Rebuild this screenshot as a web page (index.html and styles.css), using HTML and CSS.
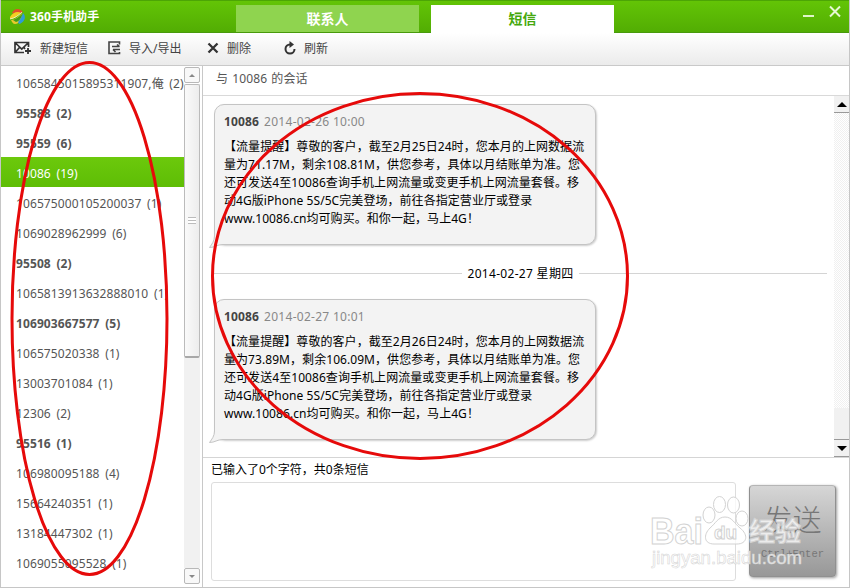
FILE: index.html
```html
<!DOCTYPE html>
<html lang="zh-CN">
<head>
  <meta charset="UTF-8">
  <title>360手机助手</title>
  <link rel="stylesheet" href="styles.css">
</head>
<body>
<div class="window">

  <header class="titlebar">
    <div class="brand">
      <svg width="17" height="17" viewBox="0 0 17 17">
        <path d="M3 5 C5 0 11 0 14 4 L8 7 Z" fill="#e2502a"/>
        <path d="M1 9 C4 4 9 3 12 5 L7 9 C5 10 3 11 1 11 Z" fill="#f3cf22"/>
        <path d="M2 12 C6 12 9 9 13 5 C13 10 11 16 6 16 C4 16 3 14 2 12 Z" fill="#e8c92c"/>
        <path d="M4 12 C7 11 10 9 13 6 C13 9 11 13 7 14 Z" fill="#3f9e1c"/>
        <path d="M14 5 C18 9 15 15 10 16 L9 14 C12 11 13 8 14 5 Z" fill="#2e9bd8"/>
        <path d="M1 11 C6 10 9 8 13 4" fill="none" stroke="#fff" stroke-width=".7"/>
      </svg>
      <span>360手机助手</span>
    </div>
    <nav class="tabs">
      <a class="tab">联系人</a>
      <a class="tab active">短信</a>
    </nav>
    <div class="controls">
      <svg width="40" height="16" viewBox="0 0 40 16">
        <path d="M1 12H12" stroke="#dff5c8" stroke-width="2"/>
        <path d="M28 2.500L38 12.500M38 2.500L28 12.500" stroke="#e6f8d4" stroke-width="2"/>
      </svg>
    </div>
  </header>

  <div class="toolbar">
    <a class="tool tool-new">
      <svg width="18" height="14" viewBox="0 0 18 14">
        <path d="M10 11.500H1V1.500H14.500V6M1.500 2L7.750 8L14 2M1.500 11L5.500 6.500M10 6.500L11 8" fill="none" stroke="#333" stroke-width="1.700"/>
        <path d="M14 7V13M11 10H17" stroke="#333" stroke-width="1.800"/>
      </svg>
      <span>新建短信</span>
    </a>
    <a class="tool tool-io">
      <svg width="13" height="14" viewBox="0 0 13 14">
        <path d="M11.500 3.500V1H1V12.500H11.500V11M4 5.500H11.500M9 3.500L11.500 5.500M12 8.500H5M7.500 11L5 8.500" fill="none" stroke="#444" stroke-width="1.600"/>
      </svg>
      <span>导入/导出</span>
    </a>
    <a class="tool tool-del">
      <svg width="12" height="12" viewBox="0 0 12 12">
        <path d="M1.500 1.500L10.500 10.500M10.500 1.500L1.500 10.500" stroke="#333" stroke-width="2.300"/>
      </svg>
      <span>删除</span>
    </a>
    <a class="tool tool-refresh">
      <svg width="12" height="14" viewBox="0 0 12 14">
        <path d="M6 3.500A4.500 4.500 0 1 0 10.500 8" fill="none" stroke="#333" stroke-width="2"/>
        <path d="M5.500 0L10 3.500L5.500 7Z" fill="#333"/>
      </svg>
      <span>刷新</span>
    </a>
  </div>

  <div class="main">
    <aside class="sidebar">
      <ul class="contacts">
        <li>1065845015895311907,俺 (2)</li>
        <li class="unread">95588 (2)</li>
        <li class="unread">95559 (6)</li>
        <li class="selected">10086 (19)</li>
        <li class="cut">106575000105200037 (1)</li>
        <li>1069028962999 (6)</li>
        <li class="unread">95508 (2)</li>
        <li class="cut">1065813913632888010 (1)</li>
        <li class="unread">106903667577 (5)</li>
        <li>106575020338 (1)</li>
        <li>13003701084 (1)</li>
        <li>12306 (2)</li>
        <li class="unread">95516 (1)</li>
        <li>106980095188 (4)</li>
        <li>15664240351 (1)</li>
        <li>13184447302 (1)</li>
        <li>1069055095528 (1)</li>
      </ul>
      <div class="list-scroll">
        <div class="scroll-btn"><i class="arrow-up"></i></div>
        <div class="scroll-thumb"><i class="grip"></i></div>
        <div class="scroll-track"></div>
        <div class="scroll-btn"><i class="arrow-down"></i></div>
      </div>
    </aside>

    <section class="chat">
      <div class="chat-title">与 10086 的会话</div>

      <div class="chat-body">
        <div class="messages">
          <div class="bubble">
            <div class="meta"><b>10086</b><span>2014-02-26 10:00</span></div>
            <p>【流量提醒】尊敬的客户，截至2月25日24时，您本月的上网数据流<br>量为71.17M，剩余108.81M，供您参考，具体以月结账单为准。您<br>还可发送4至10086查询手机上网流量或变更手机上网流量套餐。移<br>动4G版iPhone 5S/5C完美登场，前往各指定营业厅或登录<br>www.10086.cn均可购买。和你一起，马上4G！</p>
            <svg class="tail" width="20" height="14" viewBox="0 0 20 14">
              <path d="M5.500 0V1C5.500 6 3 9 .5 12.500C6 12.500 8 9.500 14 9.500L20 9.500V0Z" fill="#f3f3f3"/>
              <path d="M5.500 0V1C5.500 6 3 9 .5 12.500C6 12.500 8 9.500 14 9.500H20" fill="none" stroke="#c4c4c4"/>
            </svg>
          </div>

          <div class="date-line"><span>2014-02-27 星期四</span></div>

          <div class="bubble">
            <div class="meta"><b>10086</b><span>2014-02-27 10:01</span></div>
            <p>【流量提醒】尊敬的客户，截至2月26日24时，您本月的上网数据流<br>量为73.89M，剩余106.09M，供您参考，具体以月结账单为准。您<br>还可发送4至10086查询手机上网流量或变更手机上网流量套餐。移<br>动4G版iPhone 5S/5C完美登场，前往各指定营业厅或登录<br>www.10086.cn均可购买。和你一起，马上4G！</p>
            <svg class="tail" width="20" height="14" viewBox="0 0 20 14">
              <path d="M5.500 0V1C5.500 6 3 9 .5 12.500C6 12.500 8 9.500 14 9.500L20 9.500V0Z" fill="#f3f3f3"/>
              <path d="M5.500 0V1C5.500 6 3 9 .5 12.500C6 12.500 8 9.500 14 9.500H20" fill="none" stroke="#c4c4c4"/>
            </svg>
          </div>
        </div>
        <div class="chat-scroll">
          <div class="classic-btn top"><i class="black-up"></i></div>
          <div class="classic-track"></div>
          <div class="classic-thumb"></div>
          <div class="classic-btn"><i class="black-down"></i></div>
        </div>
      </div>

      <div class="compose">
        <div class="count">已输入了0个字符，共0条短信</div>
        <div class="compose-row">
          <div class="input"></div>
          <div class="send">
            <span class="send-text">发送</span>
            <span class="send-key">Ctrl+Enter</span>
          </div>
        </div>
      </div>
    </section>
  </div>

  <!-- watermark and red marks lie over the window -->
  <svg class="overlay" width="850" height="588" viewBox="0 0 850 588">
    <g class="mark">
      <text x="650" y="544" class="mark-logo" textLength="53" lengthAdjust="spacingAndGlyphs">Bai</text>
      <ellipse cx="709" cy="515" rx="6" ry="8"/>
      <ellipse cx="719.500" cy="504.500" rx="6" ry="8"/>
      <ellipse cx="733.500" cy="505" rx="6" ry="8"/>
      <ellipse cx="742" cy="518.500" rx="6" ry="7.500"/>
      <path d="M725 517C732 517 734 523 740 528C749 535 747 544 737 544H714C704 544 703 535 710 528C716 523 718 517 725 517Z"/>
      <text x="714" y="539" class="mark-du">du</text>
      <text x="749" y="541" class="mark-cn">经验</text>
      <text x="652" y="564" class="mark-url" textLength="150" lengthAdjust="spacingAndGlyphs">jingyan.baidu.com</text>
    </g>
    <ellipse class="ring" cx="89.500" cy="318.500" rx="77.500" ry="256"/>
    <ellipse class="ring" cx="420" cy="276" rx="207.500" ry="182.500"/>
  </svg>
</div>
</body>
</html>
```
FILE: styles.css
```css
* {
  box-sizing: border-box;
}

body {
  margin: 0;
  font-family: "Noto Sans", "Noto Sans CJK SC", sans-serif;
  font-size: 12px;
  color: #555;
}

ul, p {
  margin: 0;
  padding: 0;
  list-style: none;
}

svg, i {
  display: block;
}

.window {
  position: relative;
  width: 850px;
  height: 588px;
  display: flex;
  flex-direction: column;
  overflow: hidden;
  background: #fff;
  border: 1px solid #c6c6c6;
  border-top: none;
}

/* title bar */
.titlebar {
  height: 33px;
  margin: 0 -1px;
  display: flex;
  background: linear-gradient(#63c406, #52ad03);
  border-top: 1px solid #4ca505;
  border-bottom: 1px solid #489a0c;
}

.brand {
  width: 236px;
  height: 30px;
  padding-left: 9px;
  display: flex;
  align-items: center;
  gap: 4px;
  color: #fff;
  font-weight: bold;
  letter-spacing: 0.1px;
}

.tabs {
  display: flex;
  gap: 12px;
  padding-top: 4px;
}

.tab {
  width: 183px;
  height: 27px;
  line-height: 28px;
  text-align: center;
  font-size: 14px;
  font-weight: bold;
  color: #fff;
  background: #8fd44f;
}

.tab.active {
  height: 28px;
  color: #45a80c;
  background: #fff;
}

.controls {
  margin-left: auto;
  padding: 3px 8px 0 0;
}

/* toolbar */
.toolbar {
  height: 33px;
  display: flex;
  background: linear-gradient(#fff, #ebebeb);
  border-bottom: 1px solid #c9c9c9;
  color: #444;
}

.tool {
  display: flex;
  align-items: center;
  height: 30px;
}

.tool-new {
  width: 94px;
  padding-left: 13px;
  gap: 8px;
}

.tool-io {
  width: 99px;
  padding-left: 13px;
  gap: 8px;
}

.tool-del {
  width: 77px;
  padding-left: 13px;
  gap: 8px;
}

.tool-refresh {
  padding-left: 13px;
  gap: 8px;
}

.main {
  flex: 1;
  display: flex;
  min-height: 0;
}

/* contact list */
.sidebar {
  width: 202px;
  display: flex;
  border-right: 1px solid #c8c8c8;
}

.contacts {
  width: 183px;
  padding-top: 1px;
  overflow: hidden;
}

.contacts li {
  height: 30px;
  padding-left: 15px;
  line-height: 33px;
  white-space: nowrap;
  overflow: hidden;
  letter-spacing: 0.1px;
  word-spacing: 2.4px;
}

.contacts .unread {
  font-weight: bold;
}

.contacts .cut {
  width: 165px;
}

.contacts .selected {
  color: #fff;
  background: linear-gradient(#6cc90c, #5ebd05);
}

.list-scroll {
  width: 16px;
  padding: 1px 0 3px;
  display: flex;
  flex-direction: column;
}

.scroll-btn {
  height: 16px;
  display: flex;
  align-items: center;
  justify-content: center;
  border: 1px solid #b8b8b8;
  border-radius: 2px;
  background: #f8f8f8;
}

.arrow-up, .arrow-down {
  border: 3px solid transparent;
}

.arrow-up {
  border-top: none;
  border-bottom-color: #888;
}

.arrow-down {
  border-bottom: none;
  border-top-color: #888;
}

.scroll-thumb {
  height: 274px;
  margin-top: 1px;
  display: flex;
  align-items: center;
  justify-content: center;
  border: 1px solid #bbb;
  border-bottom: 2px solid #a8a8a8;
  border-radius: 2px;
  background: linear-gradient(to right, #fafafa, #ededed);
}

.grip {
  width: 8px;
  height: 7px;
  background: repeating-linear-gradient(#bbb 0, #bbb 1px, #fff 1px, #fff 3px);
}

.scroll-track {
  flex: 1;
  background: #f1f1f1;
}

/* conversation */
.chat {
  flex: 1;
  display: flex;
  flex-direction: column;
}

.chat-title {
  height: 30px;
  padding-left: 13px;
  line-height: 26px;
  border-bottom: 1px solid #d9d9d9;
  letter-spacing: 0.1px;
  word-spacing: 1px;
}

.chat-body {
  height: 361px;
  display: flex;
}

.messages {
  flex: 1;
  padding: 8px 0 0 11px;
}

.bubble {
  position: relative;
  width: 382px;
  height: 141px;
  padding: 8px 0 0 9px;
  border: 1px solid #c4c4c4;
  border-radius: 10px;
  background: #f3f3f3;
  box-shadow: 1px 1px 2px rgba(0, 0, 0, 0.2);
}

.bubble .meta {
  height: 18px;
  line-height: 18px;
  display: flex;
  gap: 5px;
  color: #888;
  letter-spacing: 0.28px;
}

.bubble b {
  color: #444;
  letter-spacing: 0.15px;
}

.bubble p {
  margin-top: 7px;
  line-height: 18px;
  color: #000;
  white-space: nowrap;
  letter-spacing: 0.06px;
}

.tail {
  position: absolute;
  left: -6px;
  bottom: -5px;
}

.date-line {
  width: 613px;
  height: 54px;
  padding-top: 2px;
  display: flex;
  align-items: center;
  gap: 6px;
  color: #000;
  letter-spacing: 0.3px;
}

.date-line::before,
.date-line::after {
  content: "";
  flex: 1;
  height: 1px;
  background: #d4d4d4;
}

.chat-scroll {
  width: 15px;
  display: flex;
  flex-direction: column;
}

.classic-btn {
  height: 18px;
  display: flex;
  align-items: center;
  justify-content: center;
  background: #f1f1f1;
  border-top: 1px solid #999;
  border-bottom: 1px solid #999;
}

.classic-btn.top {
  height: 17px;
  border-top: none;
}

.black-up, .black-down {
  border: 5px solid transparent;
}

.black-up {
  border-top: none;
  border-bottom-color: #000;
}

.black-down {
  border-bottom: none;
  border-top-color: #000;
}

.classic-track {
  flex: 1;
  background: repeating-conic-gradient(#f0f0f0 0 25%, #fff 0 50%) 0 0 / 2px 2px;
}

.classic-thumb {
  height: 31px;
  background: #f1f1f1;
}

/* input area */
.compose {
  flex: 1;
  padding: 0 12px 0 8px;
  border-top: 1px solid #d5d5d5;
}

.count {
  height: 24px;
  line-height: 23px;
  color: #000;
}

.compose-row {
  display: flex;
  gap: 13px;
}

.input {
  width: 525px;
  height: 99px;
  border: 1px solid #ddd;
  border-radius: 3px;
}

.send {
  width: 87px;
  height: 92px;
  margin-top: 3px;
  padding-top: 12px;
  display: flex;
  flex-direction: column;
  align-items: center;
  border: 1px solid #909090;
  border-top-color: #b5b5b5;
  border-radius: 4px;
  background: linear-gradient(#d6d6d6, #989898);
  box-shadow: 1px 1px 3px rgba(0, 0, 0, 0.4);
  color: #777;
}

.send-text {
  font-size: 29px;
  font-weight: 300;
  line-height: 44px;
}

.send-key {
  font-family: "Liberation Mono", monospace;
  font-size: 10.5px;
  line-height: 24px;
}

/* marks */
.overlay {
  position: absolute;
  left: -1px;
  top: 0;
}

.ring {
  fill: none;
  stroke: #e60a0a;
  stroke-width: 3;
}

.mark {
  fill: rgba(255, 255, 255, 0.75);
  stroke: #d2d2d2;
  stroke-width: 1;
  font-family: "Liberation Sans", "Noto Sans CJK SC", sans-serif;
}

.mark-logo {
  font-size: 36px;
  font-weight: bold;
}

.mark-du {
  font-size: 19px;
  font-weight: bold;
}

.mark-cn {
  font-size: 26px;
  font-weight: bold;
}

.mark-url {
  font-size: 18px;
  stroke-width: 0.5;
}
```
